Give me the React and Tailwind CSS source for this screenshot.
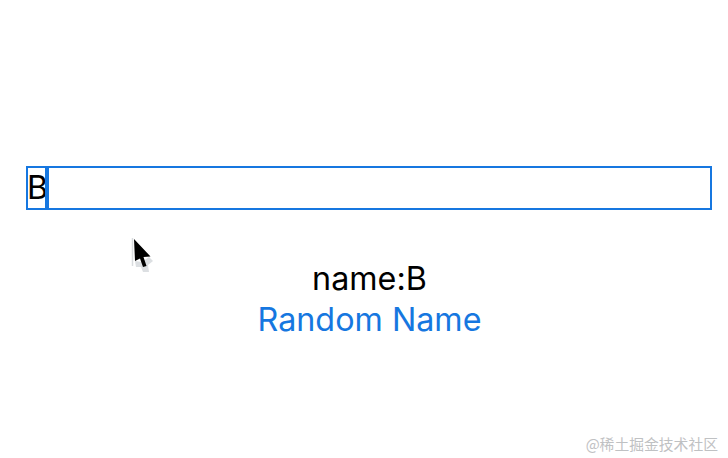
export default function App() {
  return (
    <div className="relative h-[458px] w-[728px] overflow-hidden bg-white font-['Inter','Liberation_Sans',sans-serif] text-black">
      <div className="pl-[26px] pr-[16px] pt-[166px]">
        <div className="flex h-[44px] items-center border-2 border-[#1677e0]">
          <span className="-ml-px text-[32px] leading-none">B</span>
          <span className="-ml-[3px] h-full w-[4px] bg-[#1677e0]" />
        </div>
        <div className="mt-[48px] flex flex-col items-center pl-px text-[32.3px] leading-[41px]">
          <span>name:B</span>
          <span className="text-[#1677e0]">Random Name</span>
        </div>
      </div>
      <svg className="absolute left-[128px] top-[234px]" width="28" height="42" viewBox="0 0 28 42">
        <path d="M4.5 4 L4.5 32" fill="none" stroke="#d9dcdf" strokeWidth="1.5" />
        <path d="M7 27 L8 33 L13 33 L15 38 L21 38 L20 31 L25 27 L21 23 L14 28 Z" fill="#dcdfe2" />
        <path d="M6 5 L22.5 22.5 L15.5 23 L18.5 32 L15 33 L12 24.5 L7 27 Z" fill="#000" />
      </svg>
      <div className="absolute bottom-[4px] right-[10px] font-['Noto_Sans_CJK_SC','Noto_Sans',sans-serif] text-[14.8px] leading-[20px] text-[#bfc1c3]">
        @稀土掘金技术社区
      </div>
    </div>
  );
}
